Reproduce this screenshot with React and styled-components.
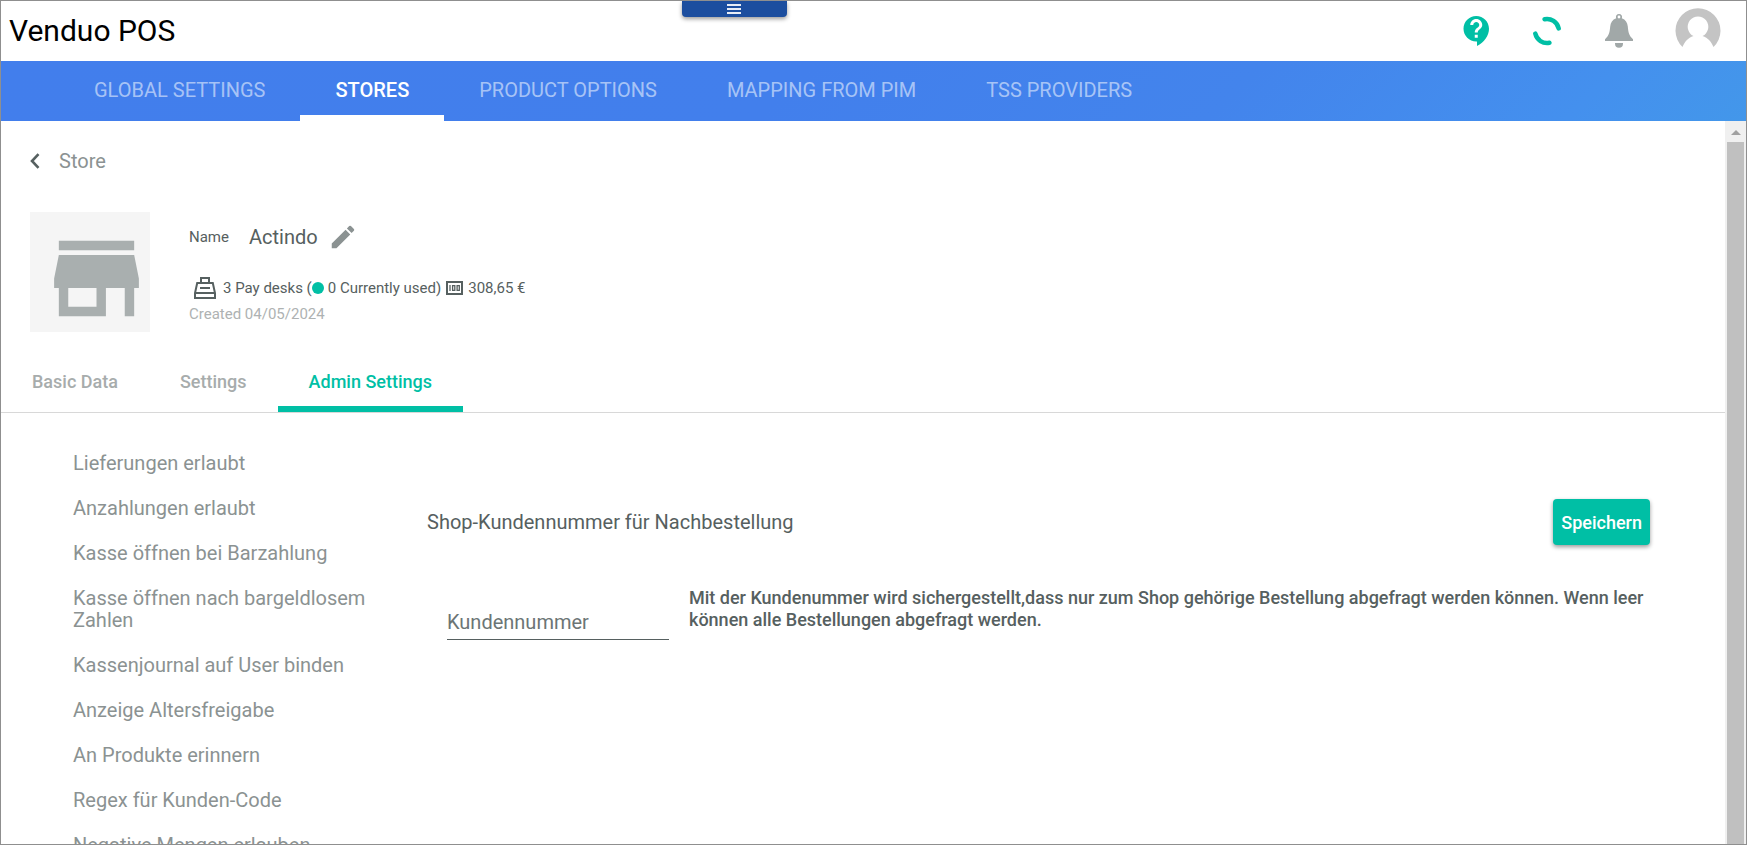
import React from "react";
import styled, { createGlobalStyle } from "styled-components";

const teal = "#00bfa5";
const ink = "#566060";

const GlobalStyle = createGlobalStyle`
  *, *::before, *::after { box-sizing: border-box; }
  body {
    margin: 0;
    background: #fff;
    color: ${ink};
    font-family: Roboto, "Liberation Sans", sans-serif;
  }
  button, input { font-family: inherit; }
  svg { display: block; flex: none; }
`;

const Window = styled.div`
  position: relative;
  display: flex;
  flex-direction: column;
  height: 100vh;
  border: 1px solid #8f8f8f;
  overflow: hidden;
`;

const Header = styled.header`
  display: flex;
  align-items: center;
  justify-content: space-between;
  height: 60px;
  flex: none;
  padding: 0 25px 0 8px;
`;

const AppTitle = styled.h1`
  margin: 0;
  font-size: 30px;
  line-height: 36px;
  font-weight: 400;
  color: #000;
`;

const HeaderActions = styled.div`
  display: flex;
  align-items: center;
  height: 60px;
`;

const IconButton = styled.button`
  display: flex;
  align-items: center;
  justify-content: center;
  width: ${(p) => p.$width || 36}px;
  height: ${(p) => p.$width || 36}px;
  margin-left: ${(p) => p.$gap || 0}px;
  padding: 0;
  border: 0;
  background: none;
  color: ${(p) => p.$color || teal};
  cursor: pointer;
`;

const MenuHandle = styled.button`
  position: absolute;
  top: 0;
  left: 39%;
  display: flex;
  align-items: center;
  justify-content: center;
  width: 105px;
  height: 16px;
  padding: 0;
  border: 0;
  border-radius: 0 0 4px 4px;
  background: #1c4e9f;
  color: #fff;
  box-shadow: 0 2px 4px rgba(0, 0, 0, 0.4);
  cursor: pointer;
`;

const MainNav = styled.nav`
  display: flex;
  height: 60px;
  flex: none;
  padding-left: 58px;
  background: linear-gradient(135deg, #427eec 0%, #427fec 45%, #4384ec 70%, #4490ee 90%, #4397ea 100%);
`;

const NavLink = styled.a`
  padding: 16px 35px 0;
  font-size: 20px;
  line-height: 26px;
  font-weight: ${(p) => (p.$active ? 500 : 400)};
  text-decoration: none;
  white-space: nowrap;
  color: ${(p) => (p.$active ? "#fff" : "rgba(255, 255, 255, 0.55)")};
  border-bottom: 6px solid ${(p) => (p.$active ? "#fff" : "transparent")};
`;

const Body = styled.div`
  display: flex;
  flex: 1;
  min-height: 0;
`;

const Page = styled.main`
  flex: 1;
  min-width: 0;
  overflow: hidden;
`;

const Scrollbar = styled.div`
  display: flex;
  flex-direction: column;
  align-items: center;
  width: 21px;
  flex: none;
  background: #f0f0f0;
`;

const ScrollArrow = styled.button`
  display: flex;
  align-items: center;
  justify-content: center;
  width: 21px;
  height: 21px;
  padding: 2px 0 0;
  border: 0;
  background: none;
  color: #a0a0a0;
`;

const ScrollThumb = styled.div`
  width: 17px;
  flex: 1;
  background: #c0c0c0;
`;

const BackLink = styled.a`
  display: flex;
  align-items: center;
  gap: 19px;
  margin: 28px 0 0 29px;
  font-size: 20px;
  line-height: 24px;
  color: #8b9292;
  text-decoration: none;
`;

const StoreHead = styled.section`
  display: flex;
  gap: 39px;
  margin: 39px 29px 0;
`;

const StoreImage = styled.div`
  width: 120px;
  height: 120px;
  flex: none;
  padding: 10px 0 0 10px;
  background: #f5f5f5;
`;

const StoreInfo = styled.div`
  display: flex;
  flex-direction: column;
  font-size: 15px;
  line-height: 24px;
`;

const NameRow = styled.div`
  display: flex;
  align-items: center;
  height: 30px;
  margin-top: 10px;
`;

const StoreName = styled.span`
  margin: 0 10px 0 20px;
  font-size: 20px;
`;

const StatusRow = styled.div`
  display: flex;
  align-items: center;
  height: 24px;
  margin-top: 24px;
  padding-left: 5px;
`;

const DeskCount = styled.span`
  margin-left: 7px;
`;

const Dot = styled.span`
  width: 12px;
  height: 12px;
  margin-right: 4px;
  border-radius: 50%;
  background: ${teal};
`;

const Used = styled.span`
  margin-right: 5px;
`;

const Amount = styled.span`
  margin-left: 5px;
`;

const Created = styled.div`
  margin-top: 2px;
  color: #aeb2b2;
`;

const Tabs = styled.nav`
  display: flex;
  height: 53px;
  margin-top: 28px;
  border-bottom: 1px solid #d8d8d8;
`;

const Tab = styled.a`
  padding: 10px 31px 0;
  font-size: 18px;
  line-height: 24px;
  font-weight: 500;
  text-decoration: none;
  white-space: nowrap;
  color: ${(p) => (p.$active ? teal : "#a7acac")};
  border-bottom: 6px solid ${(p) => (p.$active ? teal : "transparent")};
`;

const Settings = styled.div`
  display: flex;
  align-items: flex-start;
  padding: 27px 75px 0 72px;
`;

const SettingsMenu = styled.ul`
  width: 313px;
  flex: none;
  margin: 0;
  padding: 0;
  list-style: none;
`;

const SettingsLink = styled.a`
  display: block;
  padding: 12px 0 11px;
  font-size: 20px;
  line-height: 22px;
  color: #8b9292;
  text-decoration: none;
`;

const Panel = styled.form`
  flex: 1;
  margin: 59px 0 0 41px;
`;

const PanelHead = styled.div`
  display: flex;
  align-items: center;
  justify-content: space-between;
`;

const PanelTitle = styled.h2`
  margin: 0;
  font-size: 20px;
  line-height: 24px;
  font-weight: 400;
`;

const SaveButton = styled.button`
  height: 46px;
  padding: 0 8px;
  border: 0;
  border-radius: 4px;
  background: ${teal};
  color: #fff;
  font-size: 18px;
  font-weight: 500;
  box-shadow: 0 2px 4px rgba(0, 0, 0, 0.4);
  cursor: pointer;
`;

const FieldRow = styled.div`
  display: flex;
  align-items: flex-start;
  gap: 20px;
  margin-top: 42px;
  padding-left: 20px;
`;

const NumberInput = styled.input`
  width: 222px;
  height: 36px;
  flex: none;
  margin-top: 17px;
  padding: 0;
  border: 0;
  border-bottom: 1px solid ${ink};
  border-radius: 0;
  background: none;
  font-size: 20px;
  color: ${ink};
  outline: 0;
  &::placeholder { color: #6c7575; opacity: 1; }
`;

const Hint = styled.p`
  flex: 1;
  margin: 0;
  font-size: 18px;
  line-height: 22px;
  font-weight: 500;
`;

const HelpIcon = () => (
  <svg width="36" height="36" viewBox="0 0 24 24" fill="currentColor">
    <path d="M11.5 2C6.81 2 3 5.81 3 10.5S6.81 19 11.5 19h.5v3c4.86-2.34 8-7 8-11.5C20 5.81 16.19 2 11.5 2zm1 14.5h-2v-2h2v2zm0-3.5h-2c0-3.25 3-3 3-5 0-1.1-.9-2-2-2s-2 .9-2 2h-2c0-2.21 1.79-4 4-4s4 1.79 4 4c0 2.5-3 2.75-3 5z" />
  </svg>
);

const SyncIcon = () => (
  <svg width="30" height="30" viewBox="-15 -15 30 30" fill="none" stroke="currentColor" strokeWidth="4.500" strokeLinecap="round">
    <path d="M-2.4-11.8A12 12 0 0 1 11.7-2.6M2.4 11.8A12 12 0 0 1-11.7 2.6" />
  </svg>
);

const BellIcon = () => (
  <svg width="28" height="34" viewBox="0 0 28 34" fill="currentColor">
    <path fillRule="evenodd" d="M14 0a3 3 0 0 0-2.8 4.2C7.4 5.500 5.600 8.500 5.200 12.500 4.700 18 4.200 21.500 0 25.200V27h28v-1.800c-4.200-3.700-4.700-7.200-5.200-12.700-.4-4-2.200-7-6-8.300A3 3 0 0 0 14 0zm0 1.600a1.400 1.400 0 1 1 0 2.800 1.400 1.400 0 0 1 0-2.800z" />
    <path d="M10 29h8v.8a4 4 0 0 1-8 0z" />
  </svg>
);

const AvatarIcon = () => (
  <svg width="46" height="46" viewBox="0 0 46 46">
    <path fill="#c4c4c4" d="M7.500 39A22.500 22.500 0 1 1 38.500 39C36.500 34 33 29.800 27.500 28A10.300 10.300 0 1 0 18.500 28C13 29.800 9.500 34 7.500 39z" />
  </svg>
);

const MenuIcon = () => (
  <svg width="14" height="10" viewBox="0 0 14 10" fill="currentColor">
    <path d="M0 0h14v2H0zM0 4h14v2H0zM0 8h14v2H0z" opacity=".9" />
  </svg>
);

const BackIcon = () => (
  <svg width="10" height="16" viewBox="0 0 10 16" fill="none" stroke={ink} strokeWidth="2.600">
    <path d="M8.500 1.200 2 8l6.500 6.800" />
  </svg>
);

const StoreIcon = () => (
  <svg width="113" height="113" viewBox="0 0 24 24" fill="#a9afaf">
    <path d="M20 4H4v2h16V4zm1 10v-2l-1-5H4l-1 5v2h1v6h10v-6h4v6h2v-6h1zm-9 4H6v-4h6v4z" />
  </svg>
);

const EditIcon = () => (
  <svg width="30" height="30" viewBox="0 0 24 24" fill="currentColor">
    <path d="M3 17.250V21h3.750L17.810 9.940l-3.750-3.750L3 17.250zM20.710 7.040c.39-.39.39-1.020 0-1.410l-2.340-2.340a.996.996 0 0 0-1.410 0l-1.830 1.830 3.750 3.750 1.830-1.830z" />
  </svg>
);

const RegisterIcon = () => (
  <svg width="22" height="22" viewBox="0 0 22 22" fill="none" stroke={ink} strokeWidth="2">
    <path d="M7 6V1h8v5M3.200 6h15.600L21 16v5H1v-5zM1 16h20M6 11h10" />
  </svg>
);

const CashIcon = () => (
  <svg width="17" height="14" viewBox="0 0 17 14" fill="none" stroke={ink}>
    <rect x="1" y="1" width="15" height="12" strokeWidth="2" />
    <path strokeWidth="1.300" d="M4 4v6M6.600 4.600h2.200v4.800H6.600zM11.100 4.600h2.200v4.800h-2.200z" />
  </svg>
);

const ArrowUpIcon = () => (
  <svg width="10" height="5" viewBox="0 0 10 5" fill="currentColor">
    <path d="M5 0l5 5H0z" />
  </svg>
);

const navItems = ["GLOBAL SETTINGS", "STORES", "PRODUCT OPTIONS", "MAPPING FROM PIM", "TSS PROVIDERS"];
const tabItems = ["Basic Data", "Settings", "Admin Settings"];
const settingItems = [
  "Lieferungen erlaubt",
  "Anzahlungen erlaubt",
  "Kasse öffnen bei Barzahlung",
  "Kasse öffnen nach bargeldlosem Zahlen",
  "Kassenjournal auf User binden",
  "Anzeige Altersfreigabe",
  "An Produkte erinnern",
  "Regex für Kunden-Code",
  "Negative Mengen erlauben",
];

export default function App() {
  return (
    <Window>
      <GlobalStyle />
      <Header>
        <AppTitle>Venduo POS</AppTitle>
        <HeaderActions>
          <IconButton aria-label="Help"><HelpIcon /></IconButton>
          <IconButton aria-label="Sync" $gap={34}><SyncIcon /></IconButton>
          <IconButton aria-label="Notifications" $gap={36} $color="#a1a8a8"><BellIcon /></IconButton>
          <IconButton aria-label="Account" $gap={38} $width={46}><AvatarIcon /></IconButton>
        </HeaderActions>
      </Header>
      <MenuHandle aria-label="Menu"><MenuIcon /></MenuHandle>
      <MainNav>
        {navItems.map((item) => (
          <NavLink key={item} href="#" $active={item === "STORES"}>{item}</NavLink>
        ))}
      </MainNav>
      <Body>
        <Page>
          <BackLink href="#"><BackIcon />Store</BackLink>
          <StoreHead>
            <StoreImage><StoreIcon /></StoreImage>
            <StoreInfo>
              <NameRow>
                <span>Name</span>
                <StoreName>Actindo</StoreName>
                <IconButton aria-label="Edit name" $width={30} $color="#8b9292"><EditIcon /></IconButton>
              </NameRow>
              <StatusRow>
                <RegisterIcon />
                <DeskCount>3 Pay desks (</DeskCount>
                <Dot />
                <Used>0 Currently used)</Used>
                <CashIcon />
                <Amount>308,65 €</Amount>
              </StatusRow>
              <Created>Created 04/05/2024</Created>
            </StoreInfo>
          </StoreHead>
          <Tabs>
            {tabItems.map((item) => (
              <Tab key={item} href="#" $active={item === "Admin Settings"}>{item}</Tab>
            ))}
          </Tabs>
          <Settings>
            <SettingsMenu>
              {settingItems.map((item) => (
                <li key={item}><SettingsLink href="#">{item}</SettingsLink></li>
              ))}
            </SettingsMenu>
            <Panel onSubmit={(e) => e.preventDefault()}>
              <PanelHead>
                <PanelTitle>Shop-Kundennummer für Nachbestellung</PanelTitle>
                <SaveButton type="submit">Speichern</SaveButton>
              </PanelHead>
              <FieldRow>
                <NumberInput aria-label="Kundennummer" placeholder="Kundennummer" />
                <Hint>
                  Mit der Kundenummer wird sichergestellt,dass nur zum Shop gehörige Bestellung abgefragt werden
                  können. Wenn leer können alle Bestellungen abgefragt werden.
                </Hint>
              </FieldRow>
            </Panel>
          </Settings>
        </Page>
        <Scrollbar>
          <ScrollArrow aria-label="Scroll up"><ArrowUpIcon /></ScrollArrow>
          <ScrollThumb />
        </Scrollbar>
      </Body>
    </Window>
  );
}
